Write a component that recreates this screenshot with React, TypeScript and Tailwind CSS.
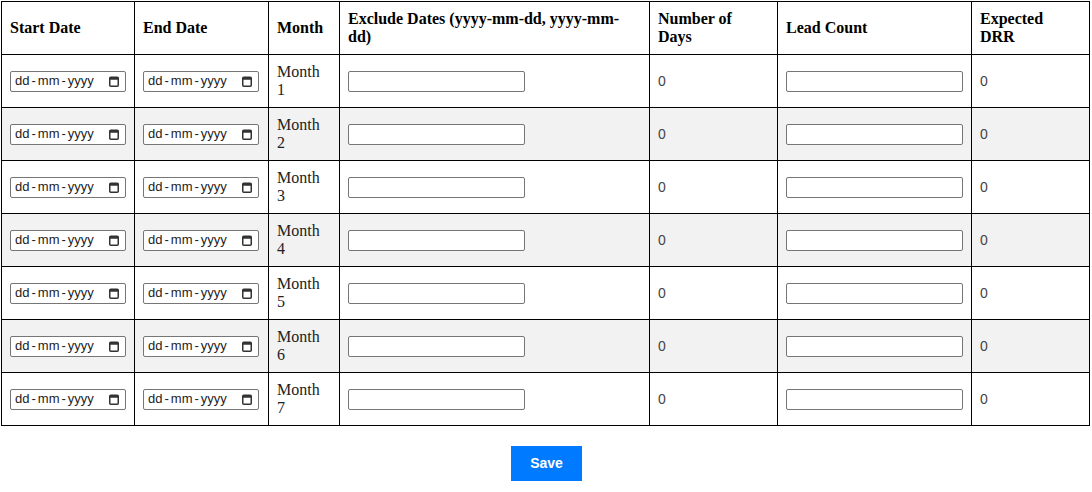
import { useState } from 'react';

const months = [1, 2, 3, 4, 5, 6, 7];

const CalendarGlyph = () => (
  <svg width="10" height="11" viewBox="0 0 10 11" className="shrink-0">
    <rect x="0.75" y="1.25" width="8.5" height="9" rx="1" fill="none" stroke="#333" strokeWidth="1.5" />
    <rect x="0.75" y="1.25" width="8.5" height="2.5" fill="#333" />
  </svg>
);

const DateField = () => (
  <div
    className="w-[116px] h-[21px] border border-[#767676] rounded-[2px] bg-white flex items-center justify-between pl-[4px] pr-[6px] text-[13px] text-[#222]"
    style={{ fontFamily: '"Liberation Sans", Arial, sans-serif' }}
  >
    <span className="flex items-center">
      dd<span className="px-[2px]">-</span>mm<span className="px-[2px]">-</span>yyyy
    </span>
    <CalendarGlyph />
  </div>
);

const TextField = () => (
  <input
    type="text"
    className="block w-[177px] h-[21px] border border-[#767676] rounded-[2px] px-[2px] text-[13.33px] bg-white"
  />
);

const App = () => {
  const [rows] = useState(months);

  return (
    <div className="w-[1092px] bg-white pt-[1px] pl-[1px]" style={{ fontFamily: '"Liberation Serif", serif' }}>
      <table className="w-[1089px] border-collapse text-[16px] text-black">
        <thead>
          <tr className="h-[53px]">
            <th className="w-[133px] border border-black p-2 text-left align-middle">Start Date</th>
            <th className="w-[134px] border border-black p-2 text-left align-middle">End Date</th>
            <th className="w-[71px] border border-black p-2 text-left align-middle">Month</th>
            <th className="w-[310px] border border-black p-2 text-left align-middle leading-[18px]">
              Exclude Dates (yyyy-mm-dd, yyyy-mm-dd)
            </th>
            <th className="w-[128px] border border-black p-2 text-left align-middle leading-[18px]">Number of Days</th>
            <th className="w-[194px] border border-black p-2 text-left align-middle">Lead Count</th>
            <th className="border border-black p-2 text-left align-middle leading-[18px]">Expected DRR</th>
          </tr>
        </thead>
        <tbody>
          {rows.map((m) => (
            <tr key={m} className={`h-[53px] ${m % 2 === 0 ? 'bg-[#f2f2f2]' : 'bg-white'}`}>
              <td className="border border-black p-2 align-middle">
                <DateField />
              </td>
              <td className="border border-black p-2 align-middle">
                <DateField />
              </td>
              <td className="border border-black p-2 align-middle leading-[18px] text-[#222]">Month {m}</td>
              <td className="border border-black p-2 align-middle">
                <TextField />
              </td>
              <td
                className="border border-black p-2 align-middle text-[14px] text-[#444]"
                style={{ fontFamily: '"Liberation Sans", Arial, sans-serif' }}
              >
                0
              </td>
              <td className="border border-black p-2 align-middle">
                <TextField />
              </td>
              <td
                className="border border-black p-2 align-middle text-[14px] text-[#444]"
                style={{ fontFamily: '"Liberation Sans", Arial, sans-serif' }}
              >
                0
              </td>
            </tr>
          ))}
        </tbody>
      </table>
      <div className="flex justify-center mt-[20px]">
        <button
          className="w-[71px] h-[35px] bg-[#007bff] text-white text-[14px] font-bold"
          style={{ fontFamily: '"Liberation Sans", Arial, sans-serif' }}
        >
          Save
        </button>
      </div>
    </div>
  );
};

export default App;
